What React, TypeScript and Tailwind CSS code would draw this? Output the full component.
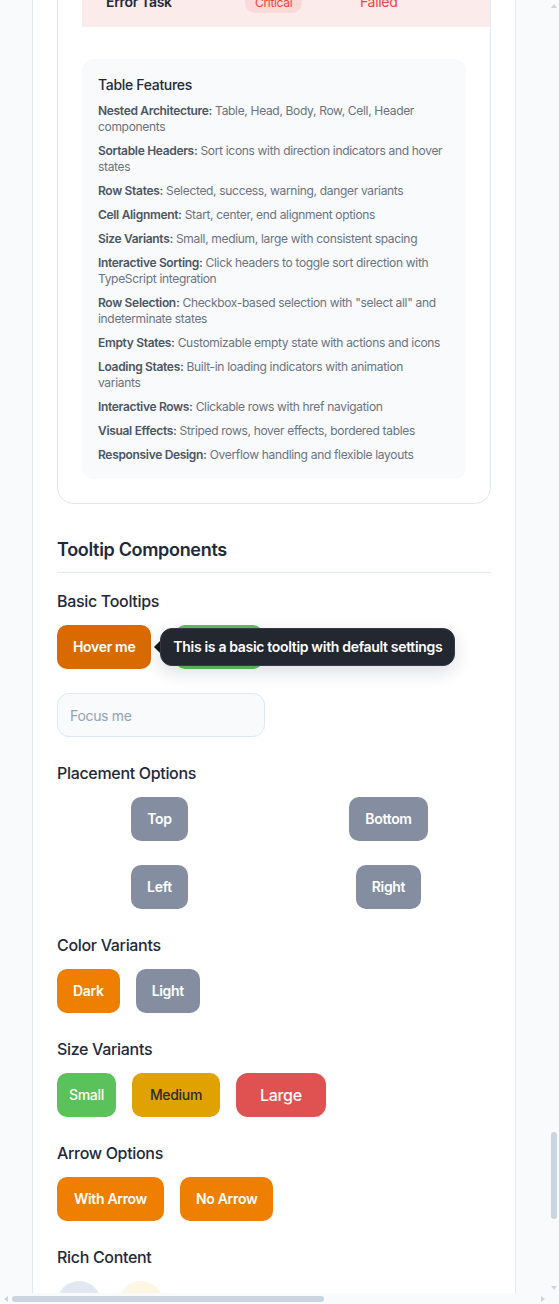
import React, { useLayoutEffect, useRef } from "react";

const features: [string, string[]][] = [
  ["Nested Architecture:", ["Table, Head, Body, Row, Cell, Header", "components"]],
  ["Sortable Headers:", ["Sort icons with direction indicators and hover", "states"]],
  ["Row States:", ["Selected, success, warning, danger variants"]],
  ["Cell Alignment:", ["Start, center, end alignment options"]],
  ["Size Variants:", ["Small, medium, large with consistent spacing"]],
  ["Interactive Sorting:", ["Click headers to toggle sort direction with", "TypeScript integration"]],
  ["Row Selection:", ["Checkbox-based selection with \"select all\" and", "indeterminate states"]],
  ["Empty States:", ["Customizable empty state with actions and icons"]],
  ["Loading States:", ["Built-in loading indicators with animation", "variants"]],
  ["Interactive Rows:", ["Clickable rows with href navigation"]],
  ["Visual Effects:", ["Striped rows, hover effects, bordered tables"]],
  ["Responsive Design:", ["Overflow handling and flexible layouts"]],
];

const rows = [
  { name: "Design Review", badge: "Low", badgeCls: "bg-[#e2e8f0] text-[#475569]", status: "Pending", statusCls: "text-[#64748b]", rowCls: "bg-white" },
  { name: "Deploy Build", badge: "High", badgeCls: "bg-[#dcfce7] text-[#16a34a]", status: "Done", statusCls: "text-[#16a34a]", rowCls: "bg-[#ecfdf3]" },
  { name: "Data Migration", badge: "Medium", badgeCls: "bg-[#fef3c7] text-[#d97706]", status: "Warning", statusCls: "text-[#d97706]", rowCls: "bg-[#fffbeb]" },
  { name: "Error Task", badge: "Critical", badgeCls: "bg-[#fbd9d9] text-[#ef4444]", status: "Failed", statusCls: "text-[#ef4444]", rowCls: "bg-[#fcebeb]" },
];

function Label({ children }: { children: React.ReactNode }) {
  return <h3 className="mb-3 text-base leading-6 font-medium text-[#1e293b]">{children}</h3>;
}

function VScrollbar() {
  return (
    <div className="flex h-[1293px] w-[11px] flex-col bg-[#f8fafc]">
      <div className="flex h-[11px] items-center justify-center">
        <span className="border-x-[3.5px] border-b-[4px] border-x-transparent border-b-[#cbd5e1]" />
      </div>
      <div className="flex-1 pt-[1121px]">
        <div className="mx-auto h-[87px] w-[6px] rounded-full bg-[#cbd5e1]" />
      </div>
      <div className="flex h-[11px] items-center justify-center">
        <span className="border-x-[3.5px] border-t-[4px] border-x-transparent border-t-[#cbd5e1]" />
      </div>
    </div>
  );
}

function HScrollbar() {
  return (
    <div className="flex h-[11px] w-[548px] bg-[#f8fafc]">
      <div className="flex w-[11px] items-center justify-center">
        <span className="border-y-[3.5px] border-r-[4px] border-y-transparent border-r-[#cbd5e1]" />
      </div>
      <div className="flex flex-1 items-center pl-px">
        <div className="h-[6px] w-[312px] rounded-full bg-[#cbd5e1]" />
      </div>
      <div className="flex w-[11px] items-center justify-center">
        <span className="border-y-[3.5px] border-l-[4px] border-y-transparent border-l-[#cbd5e1]" />
      </div>
    </div>
  );
}

export default function App() {
  const scrollRef = useRef<HTMLDivElement>(null);
  const anchorRef = useRef<HTMLDivElement>(null);

  useLayoutEffect(() => {
    const c = scrollRef.current;
    const a = anchorRef.current;
    if (!c || !a) return;
    const delta = a.getBoundingClientRect().top - c.getBoundingClientRect().top;
    c.scrollTop = c.scrollTop + delta - 536;
  }, []);

  return (
    <div
      className="grid h-[1304px] w-[559px] grid-cols-[548px_11px] grid-rows-[1293px_11px] bg-[#f8fafc] tracking-[-0.02em]"
      style={{ fontFamily: "Inter, 'Noto Sans', sans-serif" }}
    >
      <div ref={scrollRef} className="h-[1293px] w-[548px] overflow-hidden">
        <div className="px-8 py-8">
          <div className="rounded-2xl border border-[#e2e8f0] bg-white p-6">
            <div className="h-[400px]" />

            {/* Table section */}
            <div className="overflow-hidden rounded-2xl border border-[#e2e8f0] p-6">
              <table className="w-[700px] table-fixed border-collapse text-left text-sm">
                <thead>
                  <tr className="h-11 bg-[#f8fafc] text-xs font-semibold text-[#64748b]">
                    <th className="w-[139px] px-6">Task</th>
                    <th className="w-[115px] px-6">Priority</th>
                    <th className="w-[200px] px-6">Status</th>
                    <th className="px-6">Owner</th>
                  </tr>
                </thead>
                <tbody>
                  {rows.map((r) => (
                    <tr key={r.name} className={`h-[50px] ${r.rowCls}`}>
                      <td className="px-6 font-semibold text-[#1e293b]">{r.name}</td>
                      <td className="px-6">
                        <span className={`inline-block rounded-full px-2.5 py-0.5 text-xs ${r.badgeCls}`}>{r.badge}</span>
                      </td>
                      <td className={`px-6 ${r.statusCls}`}>{r.status}</td>
                      <td className="px-6 text-[#64748b]">Team</td>
                    </tr>
                  ))}
                </tbody>
              </table>

              <div className="mt-[32px] w-[384px] rounded-xl bg-[#f8fafc] p-4">
                <h4 className="mb-2 text-sm leading-5 font-medium text-[#1e293b]">Table Features</h4>
                <ul className="space-y-2 text-xs leading-4 text-[#6b7280]">
                  {features.map(([label, lines]) => (
                    <li key={label} className="whitespace-nowrap">
                      <span className="font-semibold text-[#4b5563]">{label}</span> {lines[0]}
                      {lines[1] && (
                        <>
                          <br />
                          {lines[1]}
                        </>
                      )}
                    </li>
                  ))}
                </ul>
              </div>
            </div>

            {/* Tooltip section */}
            <div ref={anchorRef} className="mt-8">
              <h2 className="border-b border-[#e2e8f0] pb-2 text-lg leading-7 font-semibold text-[#1e293b]">
                Tooltip Components
              </h2>

              <div className="mt-4 space-y-6">
                <div>
                  <Label>Basic Tooltips</Label>
                  <div className="flex gap-6">
                    <div className="relative">
                      <button className="h-11 rounded-[10px] bg-[#d96a00] px-4 text-sm font-semibold text-white">
                        Hover me
                      </button>
                      <div className="absolute top-1/2 left-[calc(100%+9px)] z-10 -translate-y-1/2 rounded-xl border border-[#343943] bg-[#23272f] px-3 py-2 text-sm leading-[20px] font-semibold whitespace-nowrap text-white shadow-[0_6px_18px_rgba(15,23,42,0.14)]">
                        <span className="absolute top-1/2 right-full mr-[1px] -translate-y-1/2 border-y-[6px] border-r-[6px] border-y-transparent border-r-[#111318]" />
                        This is a basic tooltip with default settings
                      </div>
                    </div>
                    <button className="h-11 rounded-[10px] bg-[#5bc15b] px-4 text-sm font-semibold text-white">
                      Click me
                    </button>
                  </div>
                  <input
                    className="mt-6 h-11 w-[208px] rounded-xl border border-[#e2e8f0] bg-[#f8fafc] px-3 text-sm text-[#1e293b] outline-none placeholder:text-[#94a3b8]"
                    placeholder="Focus me"
                  />
                </div>

                <div>
                  <Label>Placement Options</Label>
                  <div className="grid grid-cols-2 justify-items-center gap-6">
                    <button className="h-11 rounded-[10px] bg-[#848ea0] px-4 text-sm font-semibold text-white">Top</button>
                    <button className="h-11 rounded-[10px] bg-[#848ea0] px-4 text-sm font-semibold text-white">Bottom</button>
                    <button className="h-11 rounded-[10px] bg-[#848ea0] px-4 text-sm font-semibold text-white">Left</button>
                    <button className="h-11 rounded-[10px] bg-[#848ea0] px-4 text-sm font-semibold text-white">Right</button>
                  </div>
                </div>

                <div>
                  <Label>Color Variants</Label>
                  <div className="flex gap-4">
                    <button className="h-11 rounded-[10px] bg-[#ef7f00] px-4 text-sm font-semibold text-white">Dark</button>
                    <button className="h-11 rounded-[10px] bg-[#848ea0] px-4 text-sm font-semibold text-white">Light</button>
                  </div>
                </div>

                <div>
                  <Label>Size Variants</Label>
                  <div className="flex gap-4">
                    <button className="h-11 rounded-[10px] bg-[#5bc15b] px-3 text-sm font-medium text-white">Small</button>
                    <button className="h-11 rounded-[10px] bg-[#e0a200] px-[18px] text-sm font-medium text-[#2d2a26]">Medium</button>
                    <button className="h-11 rounded-[12px] bg-[#e05252] px-6 text-base font-medium text-white">Large</button>
                  </div>
                </div>

                <div>
                  <Label>Arrow Options</Label>
                  <div className="flex gap-4">
                    <button className="h-11 rounded-[10px] bg-[#ef7f00] px-[17px] text-sm font-semibold text-white">With Arrow</button>
                    <button className="h-11 rounded-[10px] bg-[#ef7f00] px-4 text-sm font-semibold text-white">No Arrow</button>
                  </div>
                </div>

                <div>
                  <Label>Rich Content</Label>
                  <div className="flex gap-[18px]">
                    <div className="h-11 w-11 rounded-full bg-[#e2e8f0]" />
                    <div className="h-11 w-11 rounded-full bg-[#fdf6e3]" />
                  </div>
                </div>
              </div>
            </div>

            <div className="h-[400px]" />
          </div>
        </div>
      </div>
      <VScrollbar />
      <HScrollbar />
      <div className="bg-[#f8fafc]" />
    </div>
  );
}
